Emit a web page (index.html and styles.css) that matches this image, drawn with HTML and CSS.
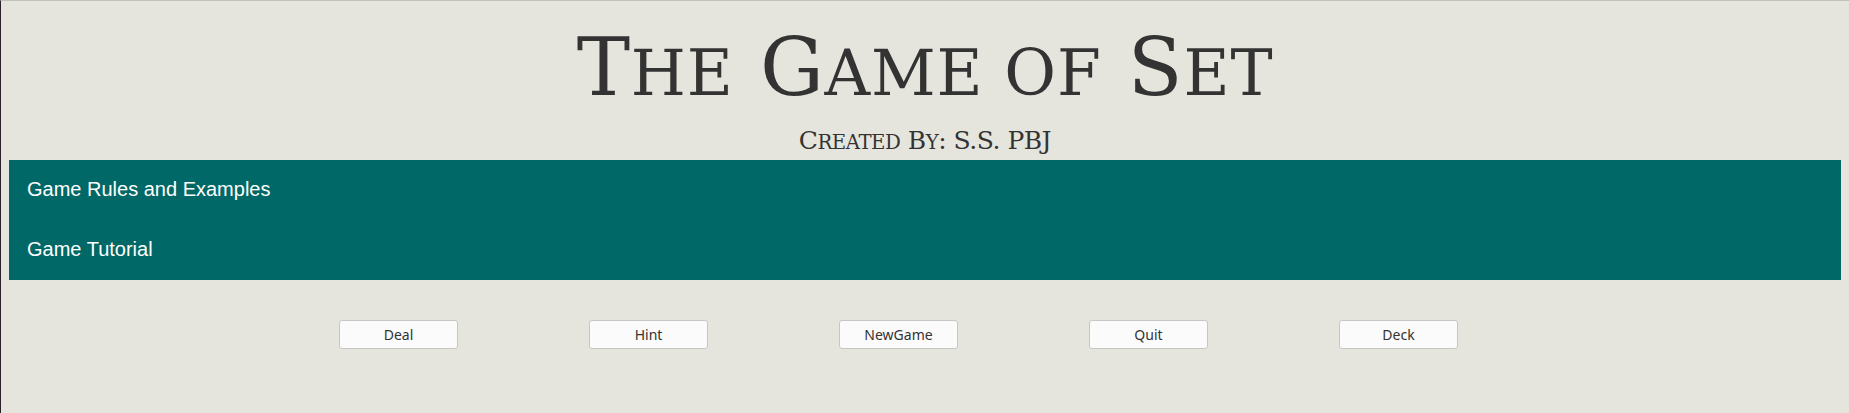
FILE: index.html
```html
<!DOCTYPE html>
<html lang="en">
<head>
<meta charset="utf-8">
<title>The Game of Set</title>
<link rel="stylesheet" href="styles.css">
</head>
<body>
<header class="masthead">
  <h1 class="title">T<span class="sc">he</span> G<span class="sc">ame of</span> S<span class="sc">et</span></h1>
  <h2 class="subtitle">C<span class="sc">reated</span> B<span class="sc">y</span>: S.S. PBJ</h2>
</header>
<nav class="menu">
  <a class="menu-item" href="#">Game Rules and Examples</a>
  <a class="menu-item" href="#">Game Tutorial</a>
</nav>
<div class="controls">
  <button class="btn">Deal</button>
  <button class="btn">Hint</button>
  <button class="btn">NewGame</button>
  <button class="btn">Quit</button>
  <button class="btn">Deck</button>
</div>
</body>
</html>
```

FILE: styles.css
```css
html {
  background: #e6e5dd;
  border-top: 1px solid #c2c0bb;
  border-left: 1px solid #2b1f29;
  min-height: 100%;
  box-sizing: border-box;
}
body {
  margin: 8px;
  color: #333333;
}
.masthead {
  text-align: center;
}
.title {
  margin: 12px 0 0;
  font-family: "DejaVu Serif", serif;
  font-weight: normal;
  font-size: 80px;
  line-height: 93px;
  letter-spacing: 0.8px;
}
.subtitle {
  margin: 12px 0 0;
  font-family: "DejaVu Serif", serif;
  font-weight: normal;
  font-size: 25px;
  line-height: 29px;
  letter-spacing: -0.5px;
}
.sc {
  text-transform: uppercase;
  font-size: 0.79em;
  line-height: 0;
}
.menu {
  margin-top: 5px;
  background: #006866;
  display: flex;
  flex-direction: column;
}
.menu-item {
  display: block;
  padding: 17px 18px 19px;
  font-family: "Liberation Sans", Arial, sans-serif;
  font-size: 20px;
  line-height: 24px;
  color: #ffffff;
  text-decoration: none;
}
.controls {
  display: flex;
  justify-content: center;
  gap: 131px;
  padding-right: 53px;
  margin-top: 40px;
}
.btn {
  width: 119px;
  height: 29px;
  padding: 0;
  background: #fbfbfb;
  border: 1px solid #c6c6c4;
  border-radius: 3px;
  font-family: "Noto Sans", "DejaVu Sans", sans-serif;
  font-size: 14px;
  color: #333333;
}
```
